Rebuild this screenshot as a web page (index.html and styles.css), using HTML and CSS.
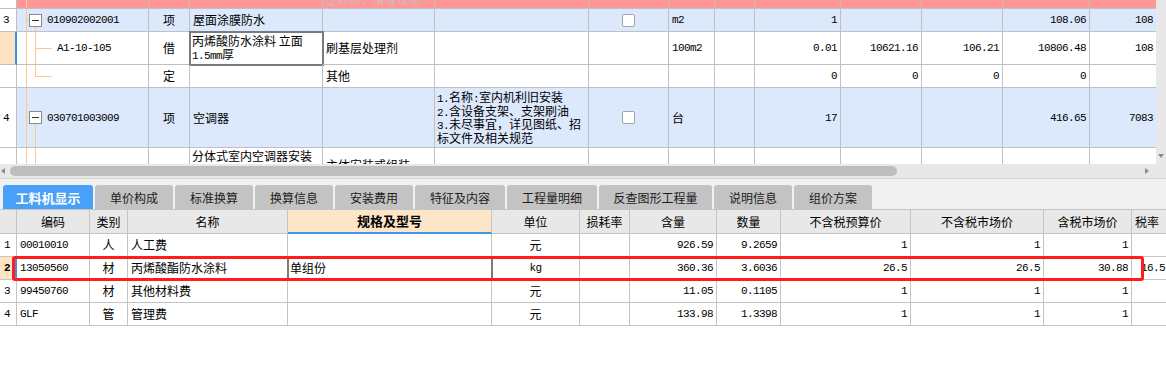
FILE: index.html
```html
<!DOCTYPE html>
<html lang="zh-CN">
<head>
<meta charset="utf-8">
<title>工料机显示</title>
<link rel="stylesheet" href="styles.css">
</head>
<body>
<div class="app">
  <div class="upper">
    <div class="grid-view">
      <div class="row pink h9">
        <div class="c c0"></div>
        <div class="c tree tr-v1"></div>
        <div class="c"></div>
        <div class="c"></div>
        <div class="c faded"><span>定地点，清理现场</span></div>
        <div class="c"></div><div class="c"></div><div class="c"></div><div class="c"></div>
        <div class="c"></div><div class="c"></div><div class="c"></div><div class="c"></div>
        <div class="c last"></div>
      </div>
      <div class="row blue h23">
        <div class="c c0 n">3</div>
        <div class="c tree tr-3"><span class="tog"></span><span class="n">010902002001</span></div>
        <div class="c ctr">项</div>
        <div class="c">屋面涂膜防水</div>
        <div class="c"></div>
        <div class="c"></div>
        <div class="c ctr"><span class="chk"></span></div>
        <div class="c n">m2</div>
        <div class="c"></div>
        <div class="c r n">1</div>
        <div class="c"></div>
        <div class="c"></div>
        <div class="c r n">108.06</div>
        <div class="c last r n">108</div>
      </div>
      <div class="row h33">
        <div class="c c0 sel"></div>
        <div class="c tree tr-a1 n">A1-10-105</div>
        <div class="c ctr">借</div>
        <div class="c edit">丙烯酸防水涂料 立面<br><span class="n">1.5mm</span>厚</div>
        <div class="c">刷基层处理剂</div>
        <div class="c"></div>
        <div class="c"></div>
        <div class="c n">100m2</div>
        <div class="c"></div>
        <div class="c r n">0.01</div>
        <div class="c r n">10621.16</div>
        <div class="c r n">106.21</div>
        <div class="c r n">10806.48</div>
        <div class="c last r n">108</div>
      </div>
      <div class="row h23">
        <div class="c c0"></div>
        <div class="c tree tr-ding"></div>
        <div class="c ctr">定</div>
        <div class="c"></div>
        <div class="c">其他</div>
        <div class="c"></div>
        <div class="c"></div>
        <div class="c"></div>
        <div class="c"></div>
        <div class="c r n">0</div>
        <div class="c r n">0</div>
        <div class="c r n">0</div>
        <div class="c r n">0</div>
        <div class="c last"></div>
      </div>
      <div class="row blue h60">
        <div class="c c0 n">4</div>
        <div class="c tree tr-4"><span class="tog"></span><span class="n">030701003009</span></div>
        <div class="c ctr">项</div>
        <div class="c">空调器</div>
        <div class="c"></div>
        <div class="c multi"><span class="n">1.</span>名称<span class="n">:</span>室内机利旧安装<br><span class="n">2.</span>含设备支架、支架刷油<br><span class="n">3.</span>未尽事宜，详见图纸、招<br>标文件及相关规范</div>
        <div class="c ctr"><span class="chk"></span></div>
        <div class="c">台</div>
        <div class="c"></div>
        <div class="c r n">17</div>
        <div class="c"></div>
        <div class="c"></div>
        <div class="c r n">416.65</div>
        <div class="c last r n">7083</div>
      </div>
      <div class="row h34">
        <div class="c c0"></div>
        <div class="c tree tr-v12"></div>
        <div class="c"></div>
        <div class="c topal">分体式室内空调器安装</div>
        <div class="c">主体安装或组装</div>
        <div class="c"></div><div class="c"></div><div class="c"></div><div class="c"></div>
        <div class="c"></div><div class="c"></div><div class="c"></div><div class="c"></div>
        <div class="c last"></div>
      </div>
    </div>
    <div class="vscroll"><span class="down"></span></div>
  </div>
  <div class="hscroll">
    <span class="larr"></span>
    <span class="thumb"></span>
    <span class="spacer"></span>
    <span class="rarr"></span>
    <span class="corner"></span>
  </div>
  <div class="tabs">
    <div class="tab active w90">工料机显示</div>
    <div class="tab w78">单价构成</div>
    <div class="tab w78">标准换算</div>
    <div class="tab w78">换算信息</div>
    <div class="tab w78">安装费用</div>
    <div class="tab w90">特征及内容</div>
    <div class="tab w90">工程量明细</div>
    <div class="tab w113">反查图形工程量</div>
    <div class="tab w78">说明信息</div>
    <div class="tab w78">组价方案</div>
  </div>
  <div class="lower">
    <div class="lrow head">
      <div class="d"></div>
      <div class="d ctr">编码</div>
      <div class="d ctr">类别</div>
      <div class="d ctr">名称</div>
      <div class="d ctr spec">规格及型号</div>
      <div class="d ctr">单位</div>
      <div class="d ctr">损耗率</div>
      <div class="d ctr">含量</div>
      <div class="d ctr">数量</div>
      <div class="d ctr">不含税预算价</div>
      <div class="d ctr">不含税市场价</div>
      <div class="d ctr">含税市场价</div>
      <div class="d">税率</div>
    </div>
    <div class="lrow">
      <div class="d num n">1</div>
      <div class="d n">00010010</div>
      <div class="d ctr">人</div>
      <div class="d">人工费</div>
      <div class="d"></div>
      <div class="d ctr">元</div>
      <div class="d"></div>
      <div class="d r n">926.59</div>
      <div class="d r n">9.2659</div>
      <div class="d r n">1</div>
      <div class="d r n">1</div>
      <div class="d r n">1</div>
      <div class="d"></div>
    </div>
    <div class="lrow">
      <div class="d num sel n b">2</div>
      <div class="d n">13050560</div>
      <div class="d ctr">材</div>
      <div class="d">丙烯酸酯防水涂料</div>
      <div class="d edit2">单组份</div>
      <div class="d ctr n">kg</div>
      <div class="d"></div>
      <div class="d r n">360.36</div>
      <div class="d r n">3.6036</div>
      <div class="d r n">26.5</div>
      <div class="d r n">26.5</div>
      <div class="d r n">30.88</div>
      <div class="d r n">16.5</div>
    </div>
    <div class="lrow">
      <div class="d num n">3</div>
      <div class="d n">99450760</div>
      <div class="d ctr">材</div>
      <div class="d">其他材料费</div>
      <div class="d"></div>
      <div class="d ctr">元</div>
      <div class="d"></div>
      <div class="d r n">11.05</div>
      <div class="d r n">0.1105</div>
      <div class="d r n">1</div>
      <div class="d r n">1</div>
      <div class="d r n">1</div>
      <div class="d"></div>
    </div>
    <div class="lrow">
      <div class="d num n">4</div>
      <div class="d n">GLF</div>
      <div class="d ctr">管</div>
      <div class="d">管理费</div>
      <div class="d"></div>
      <div class="d ctr">元</div>
      <div class="d"></div>
      <div class="d r n">133.98</div>
      <div class="d r n">1.3398</div>
      <div class="d r n">1</div>
      <div class="d r n">1</div>
      <div class="d r n">1</div>
      <div class="d"></div>
    </div>
    <div class="mark"></div>
  </div>
</div>
</body>
</html>
```

FILE: styles.css
```css
* { box-sizing: border-box; margin: 0; padding: 0; }
html, body { background: #fff; }
body {
  margin: 0;
  width: 1166px;
  height: 371px;
  overflow: hidden;
  font-family: "Noto Sans CJK SC", "Liberation Sans", sans-serif;
  font-size: 12px;
  color: #000;
}
.n {
  font-family: "Liberation Mono", "Noto Sans CJK SC", monospace;
  font-size: 11px;
  letter-spacing: -0.6px;
}
.b { font-weight: bold; }

/* ---------- upper grid ---------- */
.upper { display: flex; height: 164px; overflow: hidden; }
.grid-view { width: 1156px; overflow: hidden; }
.row {
  display: grid;
  grid-template-columns: 17px 132px 41px 133px 112px 154px 80px 46px 40px 86px 81px 81px 87px 66px;
}
.h9 { height: 9px; }
.h23 { height: 23px; }
.h33 { height: 33px; }
.h60 { height: 60px; }
.h34 { height: 34px; }
.row.blue { background: #dce8fb; }
.row.pink { background: #ff9797; }
.c {
  border-right: 1px solid #c0c0c0;
  border-bottom: 1px solid #c0c0c0;
  display: flex;
  align-items: center;
  padding: 0 3px;
  overflow: hidden;
  white-space: nowrap;
  line-height: 14px;
}
.c.last { border-right: none; }
.c.ctr { justify-content: center; }
.c.r { justify-content: flex-end; }
.c0 { background: #fff; padding: 0 0 0 3px; }
.c0.sel, .d.sel { background: #fde3c1; border-right: 2px solid #3d8fe6; }
.faded { align-items: flex-end; color: #d8b6b6; line-height: 12px; padding-left: 2px; }
.faded span { display: block; margin-bottom: 2px; }

.tree { padding-left: 12px; }
.tree.tr-a1 { padding-left: 40px; }
.tr-v1 {
  background: linear-gradient(#ffc98e, #ffc98e) 9px 0 / 1px 100% no-repeat;
}
.tr-3, .tr-4 {
  background:
    linear-gradient(#ffc98e, #ffc98e) 9px 0 / 1px 100% no-repeat,
    linear-gradient(#ffc98e, #ffc98e) 9px 50% / 3px 1px no-repeat,
    linear-gradient(#ffc98e, #ffc98e) 18px 100% / 1px calc(50% - 6px) no-repeat;
}
.tr-a1 {
  background:
    linear-gradient(#ffc98e, #ffc98e) 9px 0 / 1px 100% no-repeat,
    linear-gradient(#ffc98e, #ffc98e) 18px 0 / 1px 100% no-repeat,
    linear-gradient(#ffc98e, #ffc98e) 18px 50% / 17px 1px no-repeat;
}
.tr-ding {
  background:
    linear-gradient(#ffc98e, #ffc98e) 9px 0 / 1px 100% no-repeat,
    linear-gradient(#ffc98e, #ffc98e) 18px 0 / 1px 50% no-repeat,
    linear-gradient(#ffc98e, #ffc98e) 18px 50% / 17px 1px no-repeat;
}
.tr-v12 {
  background:
    linear-gradient(#ffc98e, #ffc98e) 9px 0 / 1px 100% no-repeat,
    linear-gradient(#ffc98e, #ffc98e) 18px 0 / 1px 100% no-repeat;
}
.tog {
  flex: none;
  width: 13px;
  height: 13px;
  border: 1px solid #8a8a8a;
  background: #fff;
  display: flex;
  align-items: center;
  justify-content: center;
  margin-right: 5px;
}
.tog::before { content: ""; width: 7px; height: 1px; background: #333; }
.chk {
  width: 13px;
  height: 13px;
  border: 1px solid #a4a4a4;
  border-radius: 2px;
  background: #fff;
}
.edit {
  outline: 2px solid #7b7b7b;
  outline-offset: -1px;
  white-space: normal;
  line-height: 13px;
  padding: 2px 2px 0;
  display: block;
}
.multi {
  display: block;
  white-space: normal;
  line-height: 13.5px;
  padding: 2px 2px 0;
}
.multi .n, .edit .n { line-height: 0; }
.topal { display: block; white-space: normal; padding: 1px 2px 0; line-height: 13px; }

.vscroll {
  width: 10px;
  background: #e8e8e8;
  display: flex;
  flex-direction: column;
  justify-content: flex-end;
  align-items: center;
  padding-bottom: 6px;
}
.down {
  width: 0; height: 0;
  border-top: 4px solid #8c8c8c;
  border-left: 3px solid transparent;
  border-right: 3px solid transparent;
}

/* ---------- horizontal scrollbar ---------- */
.hscroll {
  height: 15px;
  background: #e8e8e8;
  border-bottom: 1px solid #d6d6d6;
  display: flex;
  align-items: center;
}
.larr {
  width: 0; height: 0;
  margin-left: 1px;
  border-right: 4px solid #8c8c8c;
  border-top: 3px solid transparent;
  border-bottom: 3px solid transparent;
}
.thumb {
  width: 887px;
  height: 10px;
  margin-left: 5px;
  background: #bdbdbd;
  border-radius: 5px;
}
.spacer { flex: 1; }
.rarr {
  width: 0; height: 0;
  margin-right: 7px;
  border-left: 4px solid #8c8c8c;
  border-top: 3px solid transparent;
  border-bottom: 3px solid transparent;
}
.corner { width: 10px; height: 100%; background: #e8e8e8; }

/* ---------- tabs ---------- */
.tabs {
  display: flex;
  gap: 2px;
  height: 30px;
  padding: 6px 0 0 3px;
  background: #f0f0f0;
}
.tab {
  height: 24px;
  display: flex;
  align-items: center;
  justify-content: center;
  background: #c3c3c3;
  border-radius: 3px 3px 0 0;
  color: #1c1c1c;
  font-size: 12px;
  flex: none;
}
.tab.active { background: #48a0f7; color: #fff; font-weight: bold; font-size: 13px; }
.w90 { width: 90px; }
.w78 { width: 78px; }
.w113 { width: 113px; }

/* ---------- lower grid ---------- */
.lower {
  position: relative;
  border-top: 1px solid #c4c4c4;
  overflow: hidden;
}
.lrow {
  display: grid;
  grid-template-columns: 17px 73px 38px 160px 204px 88px 50px 87px 64px 130px 133px 88px 37px;
  height: 23px;
}
.lrow.head { height: 24px; background: #e8e8e8; }
.d {
  border-right: 1px solid #c4c4c4;
  border-bottom: 1px solid #c4c4c4;
  display: flex;
  align-items: center;
  padding: 0 3px;
  overflow: hidden;
  white-space: nowrap;
  line-height: 14px;
}
.d.ctr { justify-content: center; }
.d.r { justify-content: flex-end; }
.d.num { padding-left: 4px; }
.head .d { background: #e8e8e8; }
.head .d.spec {
  background: #fde5c7;
  font-weight: bold;
  font-size: 13px;
  border-bottom: 2px solid #3f95ee;
}
.edit2 {
  outline: 2px solid #7b7b7b;
  outline-offset: -1px;
  padding-left: 2px;
}
.mark {
  position: absolute;
  left: 12px;
  top: 46px;
  width: 1132px;
  height: 25px;
  border: 3px solid #ff1c1c;
  border-radius: 3px;
  pointer-events: none;
}
```
